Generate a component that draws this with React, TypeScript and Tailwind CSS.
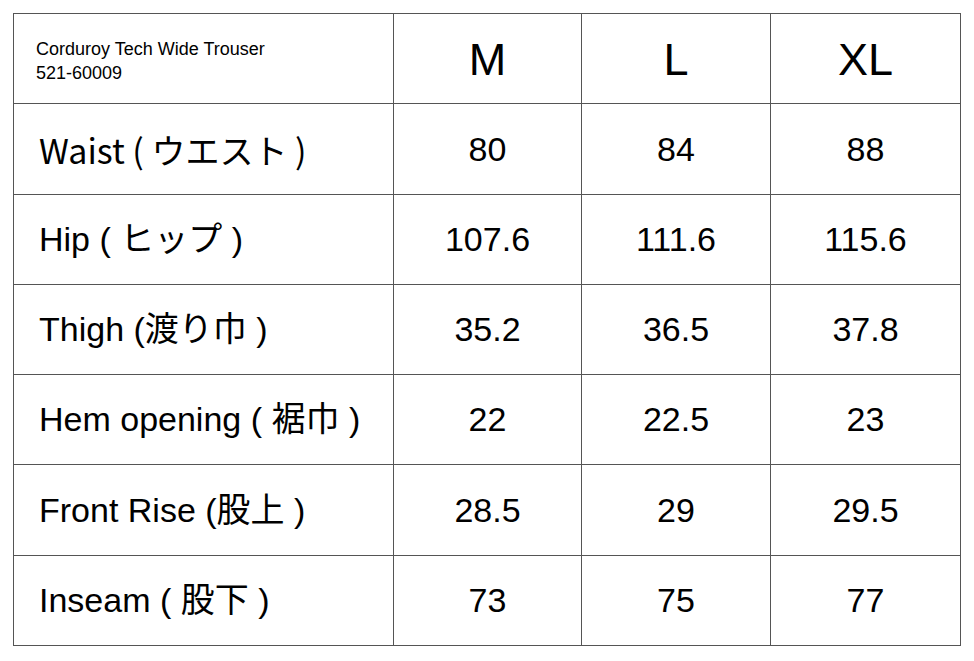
const SIZES = ["M", "L", "XL"];

const ROWS: { label: string; values: string[]; h: string; alt?: boolean }[] = [
  { label: "Waist ( ウエスト )", values: ["80", "84", "88"], h: "h-[91px]", alt: true },
  { label: "Hip ( ヒップ )", values: ["107.6", "111.6", "115.6"], h: "h-[90px]" },
  { label: "Thigh (渡り巾 )", values: ["35.2", "36.5", "37.8"], h: "h-[90px]" },
  { label: "Hem opening ( 裾巾 )", values: ["22", "22.5", "23"], h: "h-[90px]" },
  { label: "Front Rise (股上 )", values: ["28.5", "29", "29.5"], h: "h-[91px]" },
  { label: "Inseam ( 股下 )", values: ["73", "75", "77"], h: "h-[90px]" },
];

const cell = "border-r border-b border-[#555]";

export default function App() {
  return (
    <div className="w-[974px] h-[661px] bg-white pt-[13px] pl-[13px] text-black font-['Liberation_Sans','Noto_Sans_CJK_JP',sans-serif]">
      <div className="grid w-[948px] grid-cols-[380px_188px_189px_190px] border-l border-t border-[#555]">
        {/* header */}
        <div className={`${cell} h-[90px] flex flex-col justify-center pl-[22px] pt-[5px] text-[18px] leading-[24px]`}>
          <div>Corduroy Tech Wide Trouser</div>
          <div>521-60009</div>
        </div>
        {SIZES.map((s) => (
          <div key={s} className={`${cell} h-[90px] flex items-center justify-center text-[45px] pt-[2px]`}>
            {s}
          </div>
        ))}

        {ROWS.map((row) => [
          <div
            key={row.label}
            className={`${cell} ${row.h} flex items-center pl-[25px] text-[34px] ${
              row.alt ? "font-['Noto_Sans_CJK_JP',sans-serif]" : ""
            }`}
          >
            {row.label}
          </div>,
          ...row.values.map((v, i) => (
            <div key={row.label + i} className={`${cell} ${row.h} flex items-center justify-center text-[34px]`}>
              {v}
            </div>
          )),
        ])}
      </div>
    </div>
  );
}
